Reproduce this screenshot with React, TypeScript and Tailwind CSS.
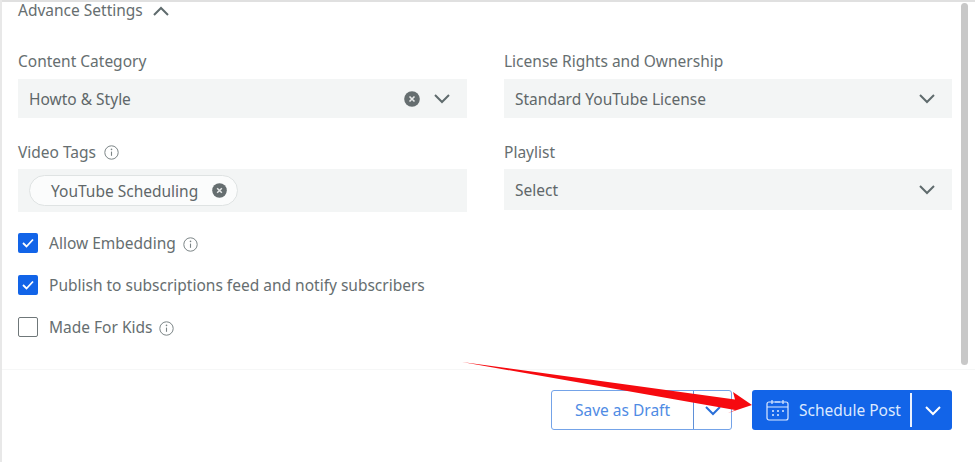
import React from "react";

const Chevron = ({ className = "", color = "#5f6b6d" }: { className?: string; color?: string }) => (
  <svg className={className} width="18" height="11" viewBox="0 0 18 11" fill="none">
    <path d="M2 2l7 7 7-7" stroke={color} strokeWidth="2" />
  </svg>
);

const Clear = ({ size = 16 }: { size?: number }) => (
  <svg width={size} height={size} viewBox="0 0 16 16">
    <circle cx="8" cy="8" r="7.8" fill="#666e70" />
    <path d="M5.5 5.5l5 5M10.5 5.5l-5 5" stroke="#e8eaea" strokeWidth="1.6" />
  </svg>
);

const Info = () => (
  <svg width="15" height="15" viewBox="0 0 15 15" fill="none">
    <circle cx="7.5" cy="7.5" r="6.7" stroke="#7b8486" strokeWidth="1" />
    <path d="M7.5 6.6v4.2" stroke="#7b8486" strokeWidth="1.1" />
    <circle cx="7.5" cy="4.4" r="0.8" fill="#7b8486" />
  </svg>
);

const Check = ({ label, checked, info }: { label: string; checked?: boolean; info?: boolean }) => (
  <div className="flex items-center h-5">
    {checked ? (
      <span className="w-5 h-5 rounded-[2px] bg-[#1264e8] flex items-center justify-center">
        <svg width="12" height="10" viewBox="0 0 12 10" fill="none">
          <path d="M1 5l3.5 3.5L11 1.5" stroke="#fff" strokeWidth="1.8" />
        </svg>
      </span>
    ) : (
      <span className="w-5 h-5 rounded-[2px] border border-[#6f7779] bg-white" />
    )}
    <span className="ml-[11px] text-[#666e70]">{label}</span>
    {info && <span className="ml-[7px] mt-[2px]"><Info /></span>}
  </div>
);

const Select = ({ value, clear, className = "h-[39px]" }: { value: string; clear?: boolean; className?: string }) => (
  <div className={`${className} bg-[#f3f5f5] flex items-center pl-[11px] pr-[16px] text-[#5f6769]`}>
    <span className="flex-1">{value}</span>
    {clear && <span className="mr-[13px]"><Clear /></span>}
    <Chevron />
  </div>
);

export default function App() {
  return (
    <div
      className="relative w-[975px] h-[462px] bg-white overflow-hidden text-[15.5px] leading-5 border-l-2 border-[#e8e8e8]"
      style={{ fontFamily: '"Noto Sans", sans-serif' }}
    >
      <div className="h-[369px] border-t-2 border-[#e0e0e0] flex">
        <div className="w-[951px] pl-[16px]">
          <div className="flex items-center h-5 -mt-[2px] text-[#666e70]">
            <span>Advance Settings</span>
            <Chevron className="ml-[9px] rotate-180 mt-[2px]" />
          </div>
          <div className="grid grid-cols-[449px_448px] gap-x-[37px] mt-[31px]">
            <div>
              <div className="text-[#666e70] h-5">Content Category</div>
              <div className="mt-[8px]"><Select value="Howto &amp; Style" clear /></div>
            </div>
            <div>
              <div className="text-[#666e70] h-5">License Rights and Ownership</div>
              <div className="mt-[8px]"><Select value="Standard YouTube License" /></div>
            </div>
            <div className="mt-[24px]">
              <div className="flex items-center gap-2 text-[#666e70] h-5">Video Tags <Info /></div>
              <div className="mt-[7px] h-[43px] bg-[#f3f5f5] flex items-center pl-[11px]">
                <span className="h-[31px] w-[209px] rounded-full border border-[#dfe3e3] bg-[#fbfcfc] flex items-center pl-[21px] text-[#5f6769]">
                  <span className="flex-1">YouTube Scheduling</span>
                  <span className="mr-[10px]"><Clear size={15} /></span>
                </span>
              </div>
            </div>
            <div className="mt-[24px]">
              <div className="text-[#666e70] h-5">Playlist</div>
              <div className="mt-[7px]"><Select value="Select" className="h-[41px]" /></div>
            </div>
          </div>
          <div className="mt-[21px] flex flex-col gap-[22px]">
            <Check label="Allow Embedding" checked info />
            <Check label="Publish to subscriptions feed and notify subscribers" checked />
            <Check label="Made For Kids" info />
          </div>
        </div>
        <div className="ml-[8px] mt-[1px] w-[7px] h-[362px] rounded-full bg-[#c8c8c8]" />
      </div>
      <div className="border-t border-[#f6f7f7] flex justify-end pr-[23px] pt-[20px]">
        <div className="flex h-10 w-[181px] rounded-[3px] border-[1.5px] border-[#74a3e8] text-[#4f8be4]">
          <span className="w-[142px] flex items-center justify-center border-r-[1.5px] border-[#5f90d8]">Save as Draft</span>
          <span className="flex-1 flex items-center justify-center"><Chevron color="#2a6fd8" /></span>
        </div>
        <div className="ml-[20px] flex items-center h-10 w-[200px] rounded-[3px] bg-[#1264e8] text-[#dce9ff]">
          <svg className="ml-[14px]" width="23" height="22" viewBox="0 0 23 22" fill="none" stroke="#dce9ff" strokeWidth="1.2">
            <rect x="1" y="3" width="21" height="18" rx="2" />
            <path d="M1 8h21M6 1v4M17 1v4M9 3h5" />
            <path d="M6 12h2M11 12h2M16 12h2M6 16h2M11 16h2" strokeWidth="1.5" />
          </svg>
          <span className="ml-[10px]">Schedule Post</span>
          <span className="ml-[9px] w-[2px] h-[34px] bg-[#eaf2ff]" />
          <Chevron className="ml-[12px]" color="#ffffff" />
        </div>
      </div>
      <svg className="absolute -left-[2px] top-0 pointer-events-none" width="975" height="462" viewBox="0 0 975 462">
        <polygon points="462,362 735,399.5 733,392 752,405 728,413 735,410" fill="#f60a0f" />
      </svg>
    </div>
  );
}
